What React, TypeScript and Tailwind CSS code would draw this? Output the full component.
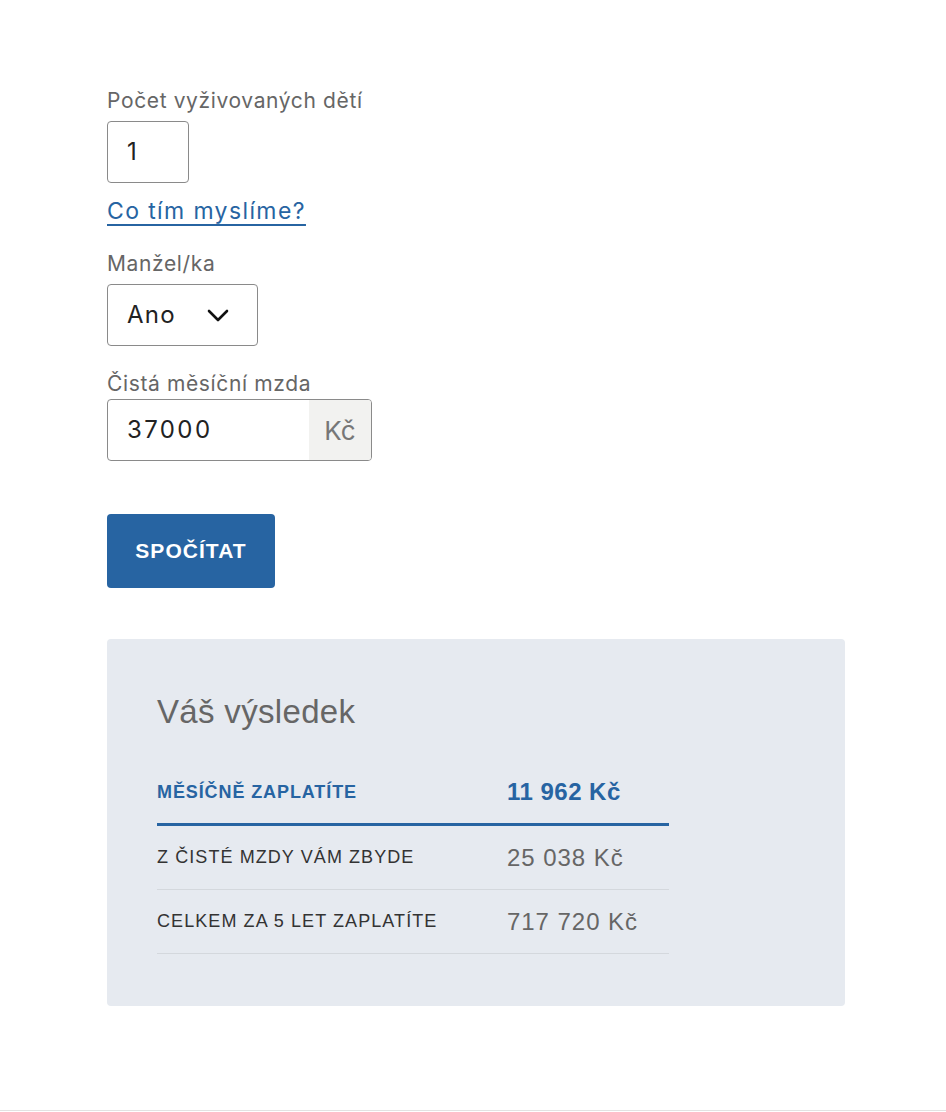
import React from "react";

export default function App() {
  const inter = { fontFamily: "Inter, 'Noto Sans', sans-serif" } as React.CSSProperties;
  const helv = { fontFamily: "'Liberation Sans', Arial, sans-serif" } as React.CSSProperties;
  return (
    <div className="w-[946px] h-[1112px] bg-white">
      <div className="h-[1111px] border-b border-[#e2e2e2] pl-[107px] pt-[86px]" style={inter}>
        <div className="text-[21px] leading-[30px] text-[#666] tracking-[0.03em]">Počet vyživovaných dětí</div>
        <div className="mt-[5px] w-[82px] h-[62px] border border-[#8a8a8a] rounded-[4px] flex items-center pl-[19px] text-[24px] text-[#222]">1</div>
        <div className="mt-[13px] h-[30px] leading-[30px] text-[23px] text-[#2764a2] underline underline-offset-[5px] decoration-[2px] tracking-[0.06em]">
          <a href="#">Co tím myslíme?</a>
        </div>
        <div className="mt-[23px] text-[21px] leading-[30px] text-[#666] tracking-[0.03em]">Manžel/ka</div>
        <div className="mt-[5px] w-[151px] h-[62px] border border-[#8a8a8a] rounded-[4px] flex items-center justify-between pl-[19px] pr-[28px] text-[24px] text-[#222] tracking-[0.05em]">
          <span>Ano</span>
          <svg width="22" height="13" viewBox="0 0 22 13" fill="none">
            <path d="M2 2 L11 11 L20 2" stroke="#111" strokeWidth="2.6" strokeLinecap="round" strokeLinejoin="round" />
          </svg>
        </div>
        <div className="mt-[23px] text-[21px] leading-[30px] text-[#666] tracking-[0.03em]">Čistá měsíční mzda</div>
        <div className="w-[265px] h-[62px] border border-[#8a8a8a] rounded-[4px] flex overflow-hidden">
          <div className="flex-1 flex items-center pl-[19px] text-[24px] text-[#222] tracking-[0.1em]">37000</div>
          <div className="w-[62px] bg-[#f2f2f0] flex items-center justify-center text-[26px] text-[#777]">Kč</div>
        </div>
        <button className="mt-[53px] w-[168px] h-[74px] bg-[#2764a2] rounded-[4px] text-white text-[21px] font-bold tracking-[0.05em]" style={helv}>
          SPOČÍTAT
        </button>
        <div className="mt-[51px] w-[738px] bg-[#e6eaf0] rounded-[4px] pt-[54px] pb-[52px] pl-[50px]" style={helv}>
          <div className="text-[33px] leading-[38px] text-[#666] tracking-[0.01em]">Váš výsledek</div>
          <div className="mt-[30px] w-[512px]">
            <div className="h-[65px] flex items-center border-b-[3px] border-[#2764a2]">
              <div className="w-[350px] text-[18px] font-bold text-[#2764a2] tracking-[0.05em]">MĚSÍČNĚ ZAPLATÍTE</div>
              <div className="text-[24px] font-bold text-[#2764a2] tracking-[0.02em]">11 962 Kč</div>
            </div>
            <div className="h-[64px] flex items-center border-b border-[#d4d8dd]">
              <div className="w-[350px] text-[18px] text-[#333] tracking-[0.06em]">Z ČISTÉ MZDY VÁM ZBYDE</div>
              <div className="text-[24px] text-[#666] tracking-[0.04em]">25 038 Kč</div>
            </div>
            <div className="h-[64px] flex items-center border-b border-[#d4d8dd]">
              <div className="w-[350px] text-[18px] text-[#333] tracking-[0.06em]">CELKEM ZA 5 LET ZAPLATÍTE</div>
              <div className="text-[24px] text-[#666] tracking-[0.04em]">717 720 Kč</div>
            </div>
          </div>
        </div>
      </div>
    </div>
  );
}
